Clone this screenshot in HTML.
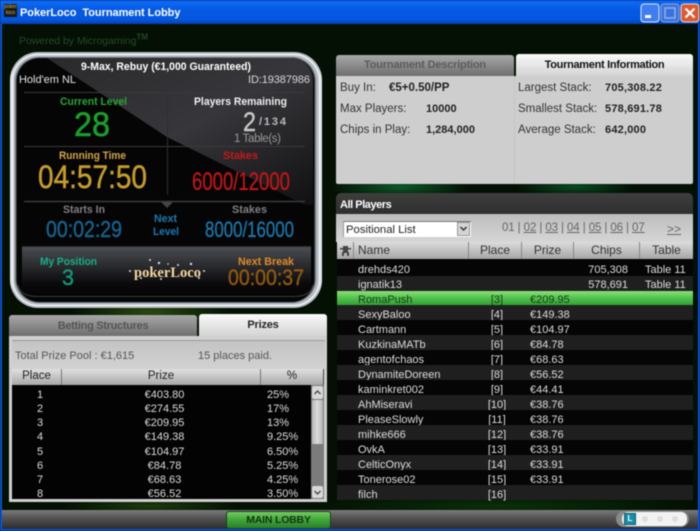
<!DOCTYPE html>
<html><head><meta charset="utf-8"><style>
html,body{margin:0;padding:0;width:700px;height:531px;overflow:hidden;background:#031003}
body{position:relative;font-family:"Liberation Sans",sans-serif;font-size:11px;letter-spacing:0}
.a{position:absolute;white-space:nowrap}
#w{position:absolute;left:0;top:0;width:700px;height:531px;filter:blur(.4px);overflow:hidden}
.r{position:absolute;left:337px;width:356px;height:15px;color:#ddd;background:#1f1f1f}
.r.k{background:#050505}
.r span{position:absolute;top:4px;white-space:nowrap}
.r .n{left:21px}.r .p{left:130px;width:60px;text-align:center}.r .z{left:193px}.r .c{left:240px;width:51px;text-align:right}.r .t{left:308px}
.pr{position:absolute;left:12px;width:299px;height:14.2px;color:#ddd}
.pr span{position:absolute;top:0;white-space:nowrap}
.pr .a1{left:0;width:56px;text-align:center}.pr .a2{left:60px;width:185px;text-align:center}.pr .a3{left:255px}
.h{position:absolute;top:242px;height:17px;line-height:16px;color:#333;text-align:center;border-right:1px solid #888;box-sizing:border-box;font-size:12px}
.h2{position:absolute;top:369px;height:16px;line-height:15px;color:#222;text-align:center;border-right:1px solid #777;box-sizing:border-box;font-size:11.5px}
.b{font-weight:bold;color:#222}
</style></head><body><div id="w">

<div class="a" style="left:0;top:0;width:700px;height:531px;background:radial-gradient(ellipse 70px 12px at 400px 187px,#0c5a2a,transparent),radial-gradient(ellipse 60px 10px at 575px 187px,#0a4a22,transparent),radial-gradient(ellipse 80px 14px at 150px 312px,#2a4a10,transparent),radial-gradient(ellipse 90px 10px at 150px 506px,#1d3a0c,transparent),radial-gradient(ellipse 200px 12px at 500px 506px,#0a300a,transparent),#031003"></div>

<!-- title bar -->
<div class="a" style="left:0;top:0;width:700px;height:24px;background:linear-gradient(#0a5ce8 0,#0d6af2 12%,#0559e4 40%,#0457df 80%,#0342b5 100%)"></div>
<div class="a" style="left:0;top:24px;width:2px;height:507px;background:#0a55d8"></div>
<div class="a" style="left:698px;top:24px;width:2px;height:507px;background:#0a55d8"></div>
<div class="a" style="left:4px;top:4px;width:13px;height:13px;background:#1a1a10;color:#d8c070;font-size:5px;line-height:6px;text-align:center;letter-spacing:0">poker<br>loco</div>
<div class="a" style="left:20px;top:6.500px;color:#fff;font-weight:bold;font-size:11px;letter-spacing:-.05px">PokerLoco&nbsp; Tournament Lobby</div>
<svg class="a" style="left:638px;top:2px" width="62" height="22">
<rect x="3" y="2" width="18" height="18" rx="3" fill="#3f7df0" stroke="#dfe9fb"/>
<rect x="7" y="13" width="6" height="3" fill="#fff"/>
<rect x="23" y="2" width="18" height="18" rx="3" fill="#3a72dc" stroke="#7fa4ea"/>
<rect x="27" y="6" width="10" height="10" fill="none" stroke="#8fb0ec" stroke-width="1.5"/>
<rect x="43" y="2" width="18" height="18" rx="3" fill="#dd5a30" stroke="#f4d9cc"/>
<path d="M47.5 6.5l9 9M56.5 6.5l-9 9" stroke="#fff" stroke-width="2.2"/>
</svg>

<div class="a" style="left:19px;top:35px;color:#28482a;font-size:10.5px;letter-spacing:-.05px">Powered by Microgaming<sup style="font-size:8px;font-weight:bold;line-height:0">TM</sup></div>

<!-- hero panel -->
<svg class="a" style="left:0;top:0" width="340" height="315">
<defs>
<linearGradient id="gb" x1="0" y1="0" x2="1" y2="0"><stop offset="0" stop-color="#eef1f4"/><stop offset=".012" stop-color="#b4bbc2"/><stop offset=".988" stop-color="#b4bbc2"/><stop offset="1" stop-color="#eef1f4"/></linearGradient>
<linearGradient id="gd" x1="0" y1="0" x2="1" y2="1"><stop offset="0" stop-color="#2a2a2c"/><stop offset=".5" stop-color="#37373b"/><stop offset="1" stop-color="#101012"/></linearGradient>
<linearGradient id="gs" x1="0" y1="0" x2="0" y2="1"><stop offset="0" stop-color="#4a4d52"/><stop offset=".75" stop-color="#0a0a0c"/><stop offset="1" stop-color="#050505"/></linearGradient>
<clipPath id="cp"><rect x="18" y="58" width="295" height="243" rx="22"/></clipPath>
</defs>
<rect x="10" y="52" width="312" height="256" rx="28" fill="url(#gb)"/>
<rect x="12.500" y="54.500" width="307" height="251" rx="26" fill="none" stroke="#f2f4f6" stroke-width="1.500"/>
<rect x="15" y="57" width="301" height="246" rx="24" fill="#6a7076"/>
<rect x="16.500" y="58" width="298" height="244" rx="23" fill="#050506"/>
<g clip-path="url(#cp)">
<path d="M47 58L167 137L305 205L315 205V58Z" fill="url(#gd)"/>
<path d="M22 247H311V296H22Z" fill="url(#gs)"/>
</g>
<path d="M18 285Q20 296 36 296.500H295Q311 296 313 285" fill="none" stroke="#3a3a3c"/>
<path d="M22 246.500H311" stroke="#2a2a2c"/>
<path d="M24 92.500H305M24 146.500H305" stroke="#3a3a3c"/>
<path d="M24 201.500H305" stroke="#3a3a3c" stroke-width="1.500"/>
<path d="M167.500 98V195" stroke="#2e2e30"/>
<path d="M161 202H173L167 208Z" fill="#444"/>

<g font-family="Liberation Sans" font-weight="bold" font-size="11">
<text x="81" y="70" fill="#fff" textLength="170" lengthAdjust="spacingAndGlyphs">9-Max, Rebuy (€1,000 Guaranteed)</text>
<text x="60" y="105" fill="#27a635" textLength="67" lengthAdjust="spacingAndGlyphs">Current Level</text>
<text x="194" y="105" fill="#f0f0f0" textLength="93" lengthAdjust="spacingAndGlyphs">Players Remaining</text>
<text x="259" y="125" fill="#bbb" textLength="27">/134</text>
<text x="59" y="159" fill="#d4a548" textLength="67" lengthAdjust="spacingAndGlyphs">Running Time</text>
<text x="223" y="159" fill="#c81818" textLength="35" lengthAdjust="spacingAndGlyphs">Stakes</text>
<text x="63" y="213" fill="#808080" textLength="42" lengthAdjust="spacingAndGlyphs">Starts In</text>
<text x="232" y="213" fill="#808080" textLength="35" lengthAdjust="spacingAndGlyphs">Stakes</text>
<text x="154" y="222" fill="#1d78b0" textLength="23" lengthAdjust="spacingAndGlyphs">Next</text>
<text x="153" y="235" fill="#1d78b0" textLength="26" lengthAdjust="spacingAndGlyphs">Level</text>
<text x="40" y="265" fill="#17b088" textLength="57" lengthAdjust="spacingAndGlyphs">My Position</text>
<text x="238" y="265" fill="#e08a28" textLength="56" lengthAdjust="spacingAndGlyphs">Next Break</text>
</g>
<g font-family="Liberation Sans" font-size="11">
<text x="19" y="83" fill="#e4e4e4" textLength="57">Hold'em NL</text>
<text x="248" y="83" fill="#d8d8d8" textLength="62">ID:19387986</text>
<text x="234" y="142" fill="#999" textLength="47" font-size="11.500">1 Table(s)</text>
</g>
<text x="74" y="136" font-family="Liberation Sans" font-size="34" fill="#1a9e2a" stroke="#1a9e2a" stroke-width=".6" textLength="36" lengthAdjust="spacingAndGlyphs">28</text>
<text x="243" y="131" font-family="Liberation Sans" font-size="27" fill="#c8c8c8" stroke="#c8c8c8" stroke-width=".4" textLength="13" lengthAdjust="spacingAndGlyphs">2</text>

<g font-family="Liberation Sans">
<text x="38" y="188" font-size="32" fill="#c49c28" stroke="#c49c28" stroke-width=".5" textLength="109" lengthAdjust="spacingAndGlyphs">04:57:50</text>
<text x="46" y="237" font-size="23.500" fill="#15658f" stroke="#15658f" stroke-width=".4" textLength="76" lengthAdjust="spacingAndGlyphs">00:02:29</text>
<text x="228" y="285" font-size="22.500" fill="#94590e" stroke="#94590e" stroke-width=".4" textLength="76" lengthAdjust="spacingAndGlyphs">00:00:37</text>
<text x="192" y="190" font-size="25" fill="#c41616" stroke="#c41616" stroke-width=".3" textLength="98" lengthAdjust="spacingAndGlyphs">6000/12000</text>
<text x="205" y="237" font-size="22" fill="#1a78ad" stroke="#1a78ad" stroke-width=".3" textLength="89" lengthAdjust="spacingAndGlyphs">8000/16000</text>
<text x="62" y="285" font-size="22" fill="#13997a" stroke="#13997a" stroke-width=".4" textLength="12" lengthAdjust="spacingAndGlyphs">3</text>
</g>
<text x="134" y="277" font-family="Liberation Serif" font-weight="bold" font-size="14.500" fill="#f4d8a0" textLength="67" lengthAdjust="spacingAndGlyphs">pokerLoco</text>
<g fill="#d8dce8"><circle cx="150" cy="260" r="1"/><circle cx="159" cy="263" r="1.200"/><circle cx="178" cy="265" r="1"/><circle cx="191" cy="264" r="1.200"/><circle cx="130" cy="271" r="1"/><circle cx="204" cy="271" r="1"/><circle cx="141" cy="278" r="1"/><circle cx="161" cy="279" r="1"/><circle cx="199" cy="278" r="1"/><circle cx="168" cy="264" r=".8"/></g>
</svg>

<!-- left tabs -->
<div class="a" style="left:9px;top:315px;width:188px;height:21px;border-radius:3px 3px 0 0;background:linear-gradient(#a8a8a8,#6e6e6e);color:#555;font-weight:bold;text-align:center;line-height:22px;letter-spacing:-.3px">Betting Structures</div>
<div class="a" style="left:199px;top:314px;width:128px;height:24px;border-radius:3px 3px 0 0;background:linear-gradient(#fafafa,#d0d0d0);color:#222;font-weight:bold;text-align:center;line-height:23px;letter-spacing:-.2px">Prizes</div>
<div class="a" style="left:9px;top:336px;width:318px;height:166px;background:#d0d0d0"></div>
<div class="a" style="left:12px;top:340px;width:313px;height:29px;background:linear-gradient(#c4c4c4,#d2d2d2);border-top:1px solid #999;box-sizing:border-box"></div>
<div class="a" style="left:15px;top:350px;color:#555">Total Prize Pool : €1,615</div>
<div class="a" style="left:198px;top:350px;color:#555">15 places paid.</div>
<div class="a" style="left:12px;top:369px;width:312px;height:16px;background:linear-gradient(#e0e0e0,#a8a8a8)"></div>
<div class="h2" style="left:12px;width:50px">Place</div>
<div class="h2" style="left:62px;width:199px">Prize</div>
<div class="h2" style="left:261px;width:63px;border-right-color:#444">%</div>
<div class="a" style="left:12px;top:385px;width:299px;height:114px;background:#030303"></div>
<div class="pr" style="top:389px"><span class="a1">1</span><span class="a2">€403.80</span><span class="a3">25%</span></div>
<div class="pr" style="top:403px"><span class="a1">2</span><span class="a2">€274.55</span><span class="a3">17%</span></div>
<div class="pr" style="top:417px"><span class="a1">3</span><span class="a2">€209.95</span><span class="a3">13%</span></div>
<div class="pr" style="top:431px"><span class="a1">4</span><span class="a2">€149.38</span><span class="a3">9.25%</span></div>
<div class="pr" style="top:445.500px"><span class="a1">5</span><span class="a2">€104.97</span><span class="a3">6.50%</span></div>
<div class="pr" style="top:459.500px"><span class="a1">6</span><span class="a2">€84.78</span><span class="a3">5.25%</span></div>
<div class="pr" style="top:473.500px"><span class="a1">7</span><span class="a2">€68.63</span><span class="a3">4.25%</span></div>
<div class="pr" style="top:487.500px;height:11.500px;overflow:hidden"><span class="a1">8</span><span class="a2">€56.52</span><span class="a3">3.50%</span></div>
<div class="a" style="left:311px;top:385px;width:13px;height:114px;background:#7c7c7c"></div>
<div class="a" style="left:312px;top:400px;width:11px;height:44px;background:linear-gradient(90deg,#b8b8b8,#dcdcdc,#b0b0b0);border-radius:1px"></div>
<div class="a" style="left:312px;top:386px;width:11px;height:13px;background:#d8d8d8;border-radius:2px"></div>
<div class="a" style="left:312px;top:486px;width:11px;height:12px;background:#d8d8d8;border-radius:2px"></div>
<svg class="a" style="left:312px;top:386px" width="11" height="113"><path d="M2.500 8L5.500 5L8.500 8M2.500 105L5.500 108L8.500 105" fill="none" stroke="#444" stroke-width="1.300"/></svg>

<!-- right tabs -->
<div class="a" style="left:336px;top:55px;width:178px;height:21px;border-radius:3px 3px 0 0;background:linear-gradient(#a8a8a8,#6e6e6e);color:#5c5c5c;font-weight:bold;text-align:center;line-height:21px;letter-spacing:-.2px">Tournament Description</div>
<div class="a" style="left:516px;top:54px;width:177px;height:24px;border-radius:3px 3px 0 0;background:linear-gradient(#fafafa,#d0d0d0);color:#111;font-weight:bold;text-align:center;line-height:22px;letter-spacing:-.3px">Tournament Information</div>
<div class="a" style="left:336px;top:76px;width:357px;height:108px;background:#cecece;border-radius:0 0 2px 2px"></div>
<div class="a" style="left:514px;top:76px;width:1px;height:108px;background:#c4c4c4"></div>
<div class="a" style="left:340px;top:82px;color:#333;font-size:11.500px">Buy In:</div><div class="a b" style="left:389px;top:82px;font-size:11.500px">€5+0.50/PP</div>
<div class="a" style="left:340px;top:103px;color:#333;font-size:11.500px">Max Players:</div><div class="a b" style="left:426px;top:103px">10000</div>
<div class="a" style="left:340px;top:124px;color:#333;font-size:11.500px">Chips in Play:</div><div class="a b" style="left:426px;top:124px">1,284,000</div>
<div class="a" style="left:518px;top:82px;color:#333;font-size:11.500px">Largest Stack:</div><div class="a b" style="left:605px;top:82px;letter-spacing:.2px">705,308.22</div>
<div class="a" style="left:518px;top:103px;color:#333;font-size:11.500px">Smallest Stack:</div><div class="a b" style="left:605px;top:103px;letter-spacing:.2px">578,691.78</div>
<div class="a" style="left:518px;top:124px;color:#333;font-size:11.500px">Average Stack:</div><div class="a b" style="left:605px;top:124px;letter-spacing:.2px">642,000</div>

<!-- all players -->
<div class="a" style="left:336px;top:193px;width:357px;height:22px;border-radius:5px 5px 0 0;background:linear-gradient(#3e3e3e,#2e2e2e)"></div>
<div class="a" style="left:340px;top:198.500px;color:#fff;font-weight:bold;letter-spacing:-.45px">All Players</div>
<div class="a" style="left:336px;top:214px;width:357px;height:28px;background:linear-gradient(#bdbdbd,#d6d6d6)"></div>
<div class="a" style="left:343px;top:221px;width:128px;height:16px;background:#fff;border-top:1px solid #777;border-left:1px solid #999;box-sizing:border-box;color:#222;font-size:11.300px;line-height:17px;padding-left:2px">Positional List</div>
<div class="a" style="left:457px;top:222px;width:13px;height:14px;background:#d4d4d4;border:1px solid #999;box-sizing:border-box"></div>
<svg class="a" style="left:458px;top:224px" width="11" height="10"><path d="M2.500 3L5.500 6L8.500 3" fill="none" stroke="#333" stroke-width="1.500"/></svg>
<div class="a" style="left:502px;top:222px;color:#666;font-size:11.500px;letter-spacing:-.1px">01 | <u>02</u> | <u>03</u> | <u>04</u> | <u>05</u> | <u>06</u> | <u>07</u></div>
<div class="a" style="left:667px;top:222px;color:#666;font-size:12px;letter-spacing:0"><u>&gt;&gt;</u></div>
<div class="a" style="left:337px;top:242px;width:356px;height:17px;background:linear-gradient(#dcdcdc,#a6a6a6)"></div>
<svg class="a" style="left:339px;top:244px" width="13" height="13"><path d="M4 2h5v2h3v1.500H9V8h1v4H8V9H5v3H3V8h1V5.500H1V4h3z" fill="#444"/></svg>
<div class="h" style="left:337px;width:17px"></div>
<div class="h" style="left:354px;width:115px;text-align:left;padding-left:4px">Name</div>
<div class="h" style="left:469px;width:53px">Place</div>
<div class="h" style="left:522px;width:52px">Prize</div>
<div class="h" style="left:574px;width:66px">Chips</div>
<div class="h" style="left:640px;width:53px;border-right:0">Table</div>

<div class="r k" style="top:259px;height:17px"><span class="n" style="top:5px">drehds420</span><span class="c" style="top:5px">705,308</span><span class="t" style="top:5px">Table 11</span></div>
<div class="r" style="top:276px;height:15px"><span class="n" style="top:3px">ignatik13</span><span class="c" style="top:3px">578,691</span><span class="t" style="top:3px">Table 11</span></div>
<div class="r" style="top:291px;height:14.500px;background:linear-gradient(#8fe07a,#4dc04a 50%,#2f9a32);color:#143a14"><span class="n" style="top:3px">RomaPush</span><span class="p" style="top:3px">[3]</span><span class="z" style="top:3px">€209.95</span></div>
<div class="r" style="top:305px;height:16px"><span class="n">SexyBaloo</span><span class="p">[4]</span><span class="z">€149.38</span></div>
<div class="r k" style="top:320px"><span class="n">Cartmann</span><span class="p">[5]</span><span class="z">€104.97</span></div>
<div class="r" style="top:335px"><span class="n">KuzkinaMATb</span><span class="p">[6]</span><span class="z">€84.78</span></div>
<div class="r k" style="top:350px"><span class="n">agentofchaos</span><span class="p">[7]</span><span class="z">€68.63</span></div>
<div class="r" style="top:365px"><span class="n">DynamiteDoreen</span><span class="p">[8]</span><span class="z">€56.52</span></div>
<div class="r k" style="top:380px"><span class="n">kaminkret002</span><span class="p">[9]</span><span class="z">€44.41</span></div>
<div class="r" style="top:395px"><span class="n">AhMiseravi</span><span class="p">[10]</span><span class="z">€38.76</span></div>
<div class="r k" style="top:410px"><span class="n">PleaseSlowly</span><span class="p">[11]</span><span class="z">€38.76</span></div>
<div class="r" style="top:425px"><span class="n">mihke666</span><span class="p">[12]</span><span class="z">€38.76</span></div>
<div class="r k" style="top:440px"><span class="n">OvkA</span><span class="p">[13]</span><span class="z">€33.91</span></div>
<div class="r" style="top:455px"><span class="n">CelticOnyx</span><span class="p">[14]</span><span class="z">€33.91</span></div>
<div class="r k" style="top:470px"><span class="n">Tonerose02</span><span class="p">[15]</span><span class="z">€33.91</span></div>
<div class="r" style="top:485px"><span class="n">filch</span><span class="p">[16]</span></div>

<!-- bottom bar -->
<div class="a" style="left:2px;top:510px;width:696px;height:19px;background:linear-gradient(#7c7c7c,#555 40%,#2c2c2c)"></div>
<div class="a" style="left:0;top:529px;width:700px;height:2px;background:#0a4fd0"></div>
<div class="a" style="left:226px;top:511px;width:105px;height:18px;border-radius:3px;background:linear-gradient(#74cc60,#3fa63a 50%,#2a7f2a);border:1px solid #1d3d1d;box-sizing:border-box;color:#123312;font-weight:bold;font-size:10.500px;text-align:center;line-height:16px;letter-spacing:-.2px">MAIN LOBBY</div>
<div class="a" style="left:616px;top:511px;width:73px;height:16px;border-radius:8px;background:#8a8a8a"></div>
<div class="a" style="left:622px;top:512px;width:65px;height:14px;border-radius:6px;background:#f2f2f2"></div>
<div class="a" style="left:624px;top:513px;width:12px;height:12px;background:#1790a8;border:1px solid #0c5a70;box-sizing:border-box;color:#fff;font-size:8px;font-weight:bold;line-height:10px;text-align:center;letter-spacing:0">L</div>
<svg class="a" style="left:640px;top:513px" width="40" height="12"><circle cx="5" cy="6" r="3" fill="#ddd"/><circle cx="20" cy="6" r="3" fill="#ddd"/><circle cx="35" cy="6" r="3" fill="#ddd"/></svg>

</div></body></html>
